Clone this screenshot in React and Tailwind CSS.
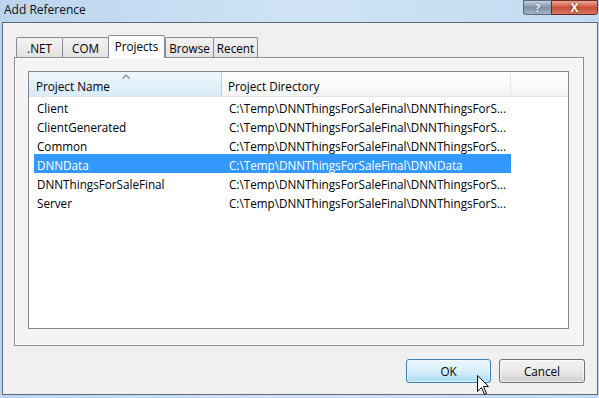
export default function App() {
  const rows = [
    ["Client", "C:\\Temp\\DNNThingsForSaleFinal\\DNNThingsForS...", false],
    ["ClientGenerated", "C:\\Temp\\DNNThingsForSaleFinal\\DNNThingsForS...", false],
    ["Common", "C:\\Temp\\DNNThingsForSaleFinal\\DNNThingsForS...", false],
    ["DNNData", "C:\\Temp\\DNNThingsForSaleFinal\\DNNData", true],
    ["DNNThingsForSaleFinal", "C:\\Temp\\DNNThingsForSaleFinal\\DNNThingsForS...", false],
    ["Server", "C:\\Temp\\DNNThingsForSaleFinal\\DNNThingsForS...", false],
  ];
  const tabs = [
    [".NET", "w-[47px]"],
    ["COM", "w-[47px]"],
    ["Projects", "w-[57px]"],
    ["Browse", "w-[49px]"],
    ["Recent", "w-[45px]"],
  ];
  return (
    <div className="relative w-[599px] h-[398px] overflow-hidden bg-gradient-to-r from-[#bcd5ee] via-[#d0e3f6] to-[#c3daf1] font-['Open_Sans','Noto_Sans',sans-serif] text-[11.7px] text-black flex flex-col">
      {/* Title bar */}
      <div className="h-[22px] shrink-0 flex items-start justify-between">
        <div className="pl-[4px] pt-[1px] leading-[18px] text-[12px] text-[#111]">Add Reference</div>
        <div className="flex mr-[1px]">
          <div className="w-[28px] h-[15px] rounded-bl-[3px] border border-[#5a6878] border-r-0 bg-gradient-to-b from-[#c3d1df] via-[#7f91a5] to-[#a3b5c7] flex items-center justify-center text-white font-bold text-[11px] leading-none [text-shadow:0_0_2px_#33404f]">?</div>
          <div className="w-[47px] h-[15px] rounded-br-[3px] border border-[#6b2a22] bg-gradient-to-b from-[#e9a898] via-[#c9503a] to-[#d77560] flex items-center justify-center text-white font-bold text-[12px] leading-none [text-shadow:0_0_2px_#4a1208]">X</div>
        </div>
      </div>

      {/* Client area */}
      <div className="ml-[2px] mr-[1px] h-[373px] shrink-0 border border-[#5f6b78] bg-[#f0f0f0] flex flex-col">
        {/* Tabs */}
        <div className="relative z-10 pt-[12px] pl-[13px] flex items-end h-[34px]">
          {tabs.map(([t, w]) =>
            t === "Projects" ? (
              <div key={t} className={`${w} h-[23px] -mb-px bg-white border border-[#898c95] border-b-0 rounded-t-[2px] flex items-start justify-center pt-[2px] leading-[16px]`}>
                {t}
              </div>
            ) : (
              <div key={t} className={`${w} h-[20px] bg-gradient-to-b from-[#f2f2f2] to-[#e3e3e3] border border-[#898c95] border-b-0 rounded-t-[2px] flex items-start justify-center pt-[2px] leading-[16px] -mr-px`}>
                {t}
              </div>
            )
          )}
        </div>

        {/* Panel */}
        <div className="ml-[11px] w-[570px] h-[289px] border border-[#898c95] bg-[#f4f4f4] shadow-[inset_1px_1px_0_#ffffff,inset_-1px_-1px_0_#ffffff] pl-[13px] pt-[13px]">
          <div className="w-[541px] h-[258px] border border-[#828790] bg-white flex flex-col">
            {/* Header */}
            <div className="flex h-[25px] border-b border-[#e5e5e5]">
              <div className="relative w-[193px] border-r border-[#96d9f9] bg-gradient-to-b from-[#eff7fc] to-[#d8ebf7] pl-[7px] flex items-end pb-[2px]">
                <svg className="absolute left-[93px] top-[2px]" width="8" height="5" viewBox="0 0 8 5">
                  <path d="M0.5 4.5 L4 1 L7.5 4.5" fill="none" stroke="#6e8eae" strokeWidth="1.2" />
                </svg>
                <span className="leading-[16px]">Project Name</span>
              </div>
              <div className="w-[289px] border-r border-[#e3e3e3] bg-gradient-to-b from-[#ffffff] to-[#f3f4f6] pl-[6px] flex items-end pb-[2px]">
                <span className="leading-[16px]">Project Directory</span>
              </div>
              <div className="flex-1 bg-gradient-to-b from-[#ffffff] to-[#f3f4f6]" />
            </div>
            {/* Rows */}
            {rows.map(([name, dir, sel]) => (
              <div key={name} className={`ml-[5px] w-[477px] h-[19px] flex items-center pt-[2px] ${sel ? "bg-[#3399ff] text-white" : ""}`}>
                <div className="w-[188px] pl-[3px] leading-[16px] whitespace-nowrap">{name}</div>
                <div className="w-[289px] pl-[7px] leading-[16px] whitespace-nowrap">{dir}</div>
              </div>
            ))}
          </div>
        </div>

        {/* Buttons */}
        <div className="mt-[13px] flex justify-end gap-[8px] pr-[12px]">
          <div className="w-[85px] h-[24px] rounded-[3px] border border-[#3c7fb1] bg-gradient-to-b from-[#eaf6fd] via-[#d9f0fc] to-[#a7d9f5] shadow-[inset_0_0_0_1px_#ffffff99] flex items-center justify-center leading-[16px]">
            OK
          </div>
          <div className="w-[86px] h-[24px] rounded-[3px] border border-[#707070] bg-gradient-to-b from-[#f2f2f2] via-[#ebebeb] to-[#cfcfcf] shadow-[inset_0_0_0_1px_#ffffffaa] flex items-center justify-center leading-[16px]">
            Cancel
          </div>
        </div>
      </div>

      {/* Mouse cursor */}
      <svg className="absolute left-[477px] top-[375px]" width="13" height="21" viewBox="0 0 13 21">
        <path d="M0.5 0.5 L0.5 16.5 L4.5 12.5 L7.5 19.5 L9.5 18.5 L6.5 11.5 L11.5 11.5 Z" fill="#ffffff" stroke="#000000" strokeWidth="1" strokeLinejoin="miter" />
      </svg>
    </div>
  );
}
